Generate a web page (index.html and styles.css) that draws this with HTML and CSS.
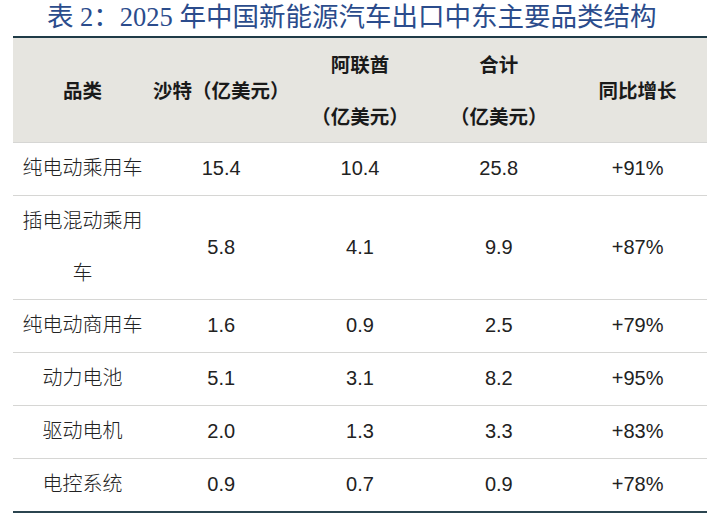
FILE: index.html
```html
<!DOCTYPE html>
<html lang="zh-CN">
<head>
<meta charset="utf-8">
<title>表 2：2025 年中国新能源汽车出口中东主要品类结构</title>
<link rel="stylesheet" href="styles.css">
</head>
<body>
<h1 class="title">表 2：2025 年中国新能源汽车出口中东主要品类结构</h1>
<table class="data">
  <thead>
    <tr>
      <th>品类</th>
      <th>沙特（亿美元）</th>
      <th>阿联酋<br>（亿美元）</th>
      <th>合计<br>（亿美元）</th>
      <th>同比增长</th>
    </tr>
  </thead>
  <tbody>
    <tr><td>纯电动乘用车</td><td>15.4</td><td>10.4</td><td>25.8</td><td>+91%</td></tr>
    <tr><td class="wrap">插电混动乘用车</td><td>5.8</td><td>4.1</td><td>9.9</td><td>+87%</td></tr>
    <tr><td>纯电动商用车</td><td>1.6</td><td>0.9</td><td>2.5</td><td>+79%</td></tr>
    <tr><td>动力电池</td><td>5.1</td><td>3.1</td><td>8.2</td><td>+95%</td></tr>
    <tr><td>驱动电机</td><td>2.0</td><td>1.3</td><td>3.3</td><td>+83%</td></tr>
    <tr class="last"><td>电控系统</td><td>0.9</td><td>0.7</td><td>0.9</td><td>+78%</td></tr>
  </tbody>
</table>
</body>
</html>
```
FILE: styles.css
```css
html, body {
  margin: 0;
  padding: 0;
  background: #ffffff;
}

body {
  width: 720px;
  height: 520px;
  overflow: hidden;
}

.title {
  margin: 0;
  padding-left: 47px;
  height: 36px;
  line-height: 34px;
  font-family: "Liberation Serif", "Noto Sans CJK SC", serif;
  font-size: 26.5px;
  font-weight: 400;
  color: #2b4c8c;
  white-space: nowrap;
}

.data {
  margin-left: 13px;
  width: 694px;
  table-layout: fixed;
  border-collapse: separate;
  border-spacing: 0;
  font-family: "Liberation Sans", "Noto Sans CJK SC", sans-serif;
  color: #222222;
}

.data th {
  background: #e6e5e0;
  border-top: 2px solid #1f3b47;
  border-bottom: 1px solid #d6d6d4;
  height: 104px;
  padding: 0;
  font-size: 19.5px;
  font-weight: 700;
  line-height: 52px;
  color: #1a1a1a;
  text-align: center;
  vertical-align: middle;
  white-space: nowrap;
  font-family: "Noto Sans CJK SC", sans-serif;
}

.data td {
  padding: 0 3px;
  font-size: 20px;
  font-weight: 300;
  line-height: 51.8px;
  text-align: center;
  vertical-align: middle;
  border-bottom: 1px solid #d6d6d4;
}

.data tr.last td {
  border-bottom: 2px solid #2b4550;
}
```
